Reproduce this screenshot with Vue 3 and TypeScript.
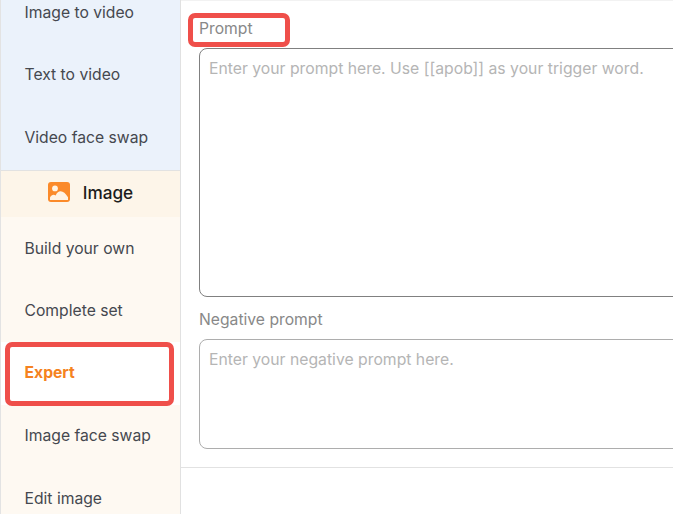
<template>
  <div class="page">
    <aside class="sidebar">
      <section class="group video">
        <a v-for="item in videoItems" :key="item" class="item">{{ item }}</a>
      </section>
      <section class="group image">
        <div class="group-title">
          <svg class="title-icon" width="22" height="20" viewBox="0 0 22 20">
            <rect x="0" y="0" width="22" height="20" rx="3" fill="#fb8a2a" />
            <circle cx="7" cy="6.4" r="2.9" fill="#fff3e4" />
            <path d="M2 18v-2.6c1.4-2.4 3.4-3.2 5.6-2 1.4-2.8 3-4.2 5-4.2 2.6 0 5 2.2 7.4 6V18z" fill="#fff3e4" />
          </svg>
          <span>Image</span>
        </div>
        <a
          v-for="item in imageItems"
          :key="item"
          class="item"
          :class="{ active: item === 'Expert' }"
        >
          {{ item }}
          <span v-if="item === 'Expert'" class="mark mark-expert"></span>
        </a>
      </section>
    </aside>

    <main class="content">
      <div class="form">
        <label class="label prompt-label">
          Prompt
          <span class="mark mark-prompt"></span>
        </label>
        <textarea
          class="field field-prompt"
          placeholder="Enter your prompt here. Use [[apob]] as your trigger word."
        ></textarea>
        <label class="label negative-label">Negative prompt</label>
        <textarea
          class="field field-negative"
          placeholder="Enter your negative prompt here."
        ></textarea>
      </div>
    </main>
  </div>
</template>

<script setup lang="ts">
const videoItems: string[] = ['Image to video', 'Text to video', 'Video face swap']
const imageItems: string[] = ['Build your own', 'Complete set', 'Expert', 'Image face swap', 'Edit image']
</script>

<style>
html,
body {
  margin: 0;
  overflow: hidden;
  background: #fff;
}
</style>

<style scoped>
.page {
  display: flex;
  width: 673px;
  height: 514px;
  overflow: hidden;
  font-family: Inter, "Liberation Sans", sans-serif;
}

.sidebar {
  flex: 0 0 181px;
  box-sizing: border-box;
  height: 514px;
  border-left: 1px solid #e3e3e3;
  border-right: 1px solid #e1e1e1;
}

.group.video {
  margin-top: -19px;
  padding-bottom: 1px;
  background: #ebf2fb;
}

.group.image {
  background: #fef9f2;
}

.group-title {
  display: flex;
  align-items: center;
  justify-content: center;
  gap: 13px;
  box-sizing: border-box;
  height: 47.5px;
  padding-bottom: 3px;
  border-top: 1px solid #e2e2e2;
  background: #fdf5e9;
  color: #1c1c1c;
  font-size: 17.2px;
  font-weight: 500;
}

.item {
  position: relative;
  display: flex;
  align-items: center;
  box-sizing: border-box;
  height: 62.5px;
  padding-left: 23.5px;
  color: #45484f;
  font-size: 15.7px;
}

.item.active {
  padding-bottom: 2px;
  background: #fff;
  color: #f58220;
  font-weight: 700;
}

.content {
  flex: 1;
  min-width: 0;
  overflow: hidden;
}

.form {
  box-sizing: border-box;
  width: 560px;
  height: 468px;
  padding: 18px 0 0 18px;
  border-top: 1px solid #f2f2f2;
  border-bottom: 1px solid #e2e2e2;
}

.label {
  position: relative;
  display: block;
  color: #888;
  font-size: 15.7px;
  line-height: 20px;
}

.field {
  display: block;
  box-sizing: border-box;
  width: 540px;
  padding: 10px 9px 9px;
  border-radius: 8px;
  outline: none;
  resize: none;
  background: #fff;
  font-family: inherit;
  font-size: 15.75px;
  line-height: 20px;
}

.field::placeholder {
  color: #b5b5b5;
  opacity: 1;
}

.field-prompt {
  height: 249px;
  margin-top: 9px;
  border: 1px solid #808080;
}

.field-negative {
  height: 110px;
  margin-top: 9px;
  border: 1px solid #adadad;
}

.negative-label {
  margin-top: 13px;
}

.mark {
  position: absolute;
  box-sizing: border-box;
  border: 5px solid #ef4f4a;
  border-radius: 7px;
  pointer-events: none;
}

.mark-expert {
  left: 4px;
  top: -0.5px;
  width: 169px;
  height: 64.5px;
}

.mark-prompt {
  left: -11px;
  top: -6px;
  width: 102px;
  height: 34px;
}
</style>
